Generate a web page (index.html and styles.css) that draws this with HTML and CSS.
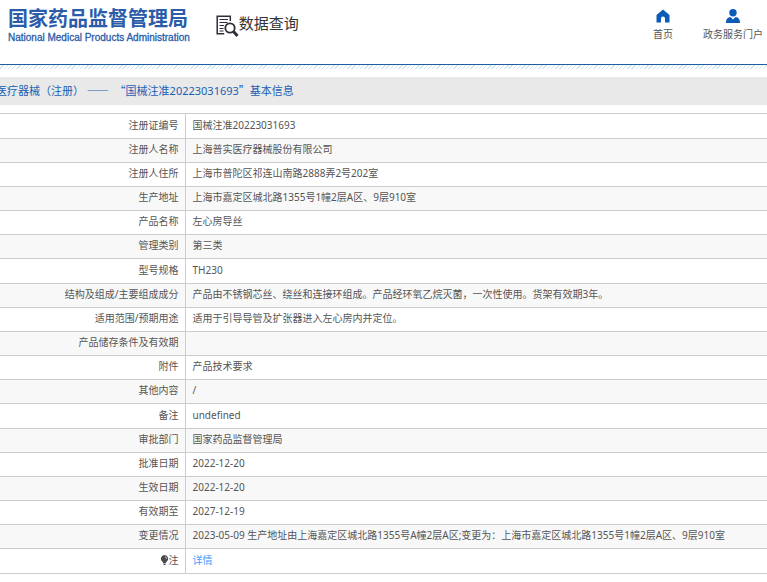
FILE: index.html
```html
<!DOCTYPE html>
<html lang="zh-CN">

<head>
    <meta charset="UTF-8" />
    <meta name="viewport" content="width=device-width, initial-scale=1.0">
    <title>数据查询</title>
    <link rel="stylesheet" href="styles.css">
</head>

<body>
    <header class="header">
        <a class="logo" href="#">
            <span class="logo-cn">国家药品监督管理局</span>
            <span class="logo-en">National Medical Products Administration</span>
        </a>
        <h1 class="search-title">
            <svg width="23" height="23" viewBox="0 0 23 23" fill="none" stroke="#2e2e3a">
                <path d="M14.3 6V1.2H1.2v17.6h7" stroke-width="1.5" />
                <path d="M3.5 4.5h8.5M3.5 7.5h8M3.5 10.5h4.5M3.5 13.5h4M3.5 16h4" stroke-width="1.2" />
                <circle cx="14" cy="13" r="4.7" stroke-width="1.8" />
                <path d="M17.5 16.5l4 4.5" stroke-width="3" />
            </svg>
            <span>数据查询</span>
        </h1>
        <nav class="nav">
            <a href="#">
                <svg width="14" height="14" viewBox="0 0 14 14" fill="#0a5cb8">
                    <path d="M7 0.5L0.5 6v7.5h4.5V9.5a2 2 0 0 1 4 0v4h4.5V6z" />
                </svg>
                <span>首页</span>
            </a>
            <a href="#">
                <svg width="14" height="14" viewBox="0 0 14 14" fill="#0a5cb8">
                    <circle cx="7" cy="3.7" r="3.7" />
                    <path d="M0 14c0-4 1.5-5.5 4.5-6L7 10.5 9.5 8c3 .5 4.5 2 4.5 6z" />
                </svg>
                <span>政务服务门户</span>
            </a>
        </nav>
    </header>

    <div class="stripes"></div>

    <main>
        <h2 class="page-title">医疗器械（注册） <span class="wide">——</span> &nbsp;<span class="wide">“</span>国械注准20223031693<span class="wide">”</span>基本信息</h2>

        <table class="info">
            <tr><th scope="row">注册证编号</th><td>国械注准20223031693</td></tr>
            <tr><th scope="row">注册人名称</th><td>上海普实医疗器械股份有限公司</td></tr>
            <tr><th scope="row">注册人住所</th><td>上海市普陀区祁连山南路2888弄2号202室</td></tr>
            <tr><th scope="row">生产地址</th><td>上海市嘉定区城北路1355号1幢2层A区、9层910室</td></tr>
            <tr><th scope="row">产品名称</th><td>左心房导丝</td></tr>
            <tr><th scope="row">管理类别</th><td>第三类</td></tr>
            <tr><th scope="row">型号规格</th><td>TH230</td></tr>
            <tr><th scope="row">结构及组成/主要组成成分</th><td>产品由不锈钢芯丝、绕丝和连接环组成。产品经环氧乙烷灭菌，一次性使用。货架有效期3年。</td></tr>
            <tr><th scope="row">适用范围/预期用途</th><td>适用于引导导管及扩张器进入左心房内并定位。</td></tr>
            <tr><th scope="row">产品储存条件及有效期</th><td></td></tr>
            <tr><th scope="row">附件</th><td>产品技术要求</td></tr>
            <tr><th scope="row">其他内容</th><td>/</td></tr>
            <tr><th scope="row">备注</th><td>undefined</td></tr>
            <tr><th scope="row">审批部门</th><td>国家药品监督管理局</td></tr>
            <tr><th scope="row">批准日期</th><td>2022-12-20</td></tr>
            <tr><th scope="row">生效日期</th><td>2022-12-20</td></tr>
            <tr><th scope="row">有效期至</th><td>2027-12-19</td></tr>
            <tr><th scope="row">变更情况</th><td>2023-05-09 生产地址由上海嘉定区城北路1355号A幢2层A区;变更为：上海市嘉定区城北路1355号1幢2层A区、9层910室</td></tr>
            <tr>
                <th scope="row"><svg class="bulb" width="9" height="10" viewBox="0 0 8 10">
                    <path d="M4 0a3.7 3.7 0 0 0-2 6.8L3 8.5h2L6 6.8A3.7 3.7 0 0 0 4 0z" fill="#4a4a4a" />
                    <path d="M3 9.5h2" stroke="#4a4a4a" />
                    <path d="M4.5 1.8q1.5.3 1.5 2" fill="none" stroke="#ccc" />
                </svg>注</th>
                <td><a href="#">详情</a></td>
            </tr>
        </table>
    </main>
</body>

</html>
```
FILE: styles.css
```css
body {
    margin: 0;
    font-family: "Noto Sans", "Noto Sans CJK SC", sans-serif;
    font-size: 10px;
    color: #555;
    background: #fff;
    overflow-x: hidden;
}

a {
    text-decoration: none;
}

.header {
    display: flex;
    align-items: flex-start;
    height: 64px;
    padding: 0 4px 0 8px;
    border-bottom: 1px solid #1f5f9f;
}

.logo {
    display: flex;
    flex-direction: column;
    padding-top: 7px;
    color: #2a5caa;
}

.logo-cn {
    font-size: 20px;
    font-weight: 700;
    line-height: 24px;
}

.logo-en {
    font-family: "Liberation Sans", sans-serif;
    font-size: 10px;
    line-height: 14px;
    -webkit-text-stroke: 0.3px #2a5caa;
}

.search-title {
    display: flex;
    margin: 0 0 0 26px;
    padding-top: 13px;
    color: #333;
    font-size: 15px;
    font-weight: 400;
    line-height: 21px;
}

.search-title svg {
    margin-top: 2px;
}

.nav {
    display: flex;
    gap: 30px;
    margin-left: auto;
    padding-top: 9px;
}

.nav a {
    display: flex;
    flex-direction: column;
    align-items: center;
    gap: 4px;
    color: #555;
    line-height: 14px;
}

.stripes {
    height: 4px;
    background: repeating-linear-gradient(135deg, #fff 0, #fff 2px, #cfe8f3 2px, #cfe8f3 3px);
}

.page-title {
    margin: 8px 0;
    color: #1a5fb4;
    background: #e9e9e9;
    font-size: 11px;
    font-weight: 400;
    line-height: 28px;
    text-indent: -4px;
    white-space: nowrap;
}

.wide {
    font-family: "Noto Sans CJK SC", sans-serif;
    line-height: 1;
}

.info {
    width: 100%;
    border-collapse: collapse;
    border-bottom: 1px solid #ccc;
}

.info th,
.info td {
    box-sizing: border-box;
    height: 24px;
    padding: 0 7px 3px;
    border-top: 1px solid #ccc;
    font-weight: 400;
    line-height: 16px;
    text-align: left;
}

.info th {
    width: 185px;
    padding-right: 6px;
    border-right: 1px solid #ccc;
    text-align: right;
}

.info tr:nth-child(even) {
    background: #f8f8f8;
}

.info tr:nth-child(6n + 1) th {
    height: 25px;
}

.info a {
    color: #409eff;
}

.bulb {
    vertical-align: -1px;
}
```
